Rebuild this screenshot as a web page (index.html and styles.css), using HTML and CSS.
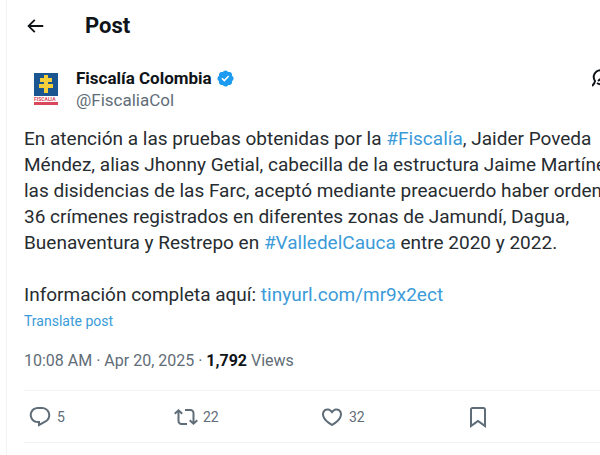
FILE: index.html
```html
<!DOCTYPE html>
<html lang="es">
<head>
    <meta charset="UTF-8">
    <meta name="viewport" content="width=device-width, initial-scale=1.0">
    <title>Post</title>
    <link rel="stylesheet" href="styles.css">
</head>
<body>
    <main class="column">
        <header class="topbar">
            <button class="icon-btn back" aria-label="Back">
                <svg viewBox="0 0 24 24"><path d="M7.414 13l5.043 5.04-1.414 1.42L3.586 12l7.457-7.46 1.414 1.42L7.414 11H21v2H7.414z"/></svg>
            </button>
            <h1>Post</h1>
        </header>

        <article class="post">
            <div class="author">
                <svg class="avatar" viewBox="0 0 44 44" role="img" aria-label="Fiscalía">
                    <rect x="10" y="6" width="24" height="23" fill="#1c5691"/>
                    <path d="M20 8h4v3h4v4h-4v2h5v4h-5v5h-4v-5h-5v-4h5v-2h-4v-4h4z" fill="#f4cf3a"/>
                    <text x="10" y="34" class="avatar-text">FISCALIA</text>
                    <rect x="10" y="35" width="24" height="3" fill="#d9475a"/>
                </svg>
                <div class="names">
                    <div class="name">
                        <a href="#">Fiscalía Colombia</a>
                        <svg class="badge" viewBox="0 0 22 22"><path d="M20.396 11c-.018-.646-.215-1.275-.57-1.816-.354-.54-.852-.972-1.438-1.246.223-.607.27-1.264.14-1.897-.131-.634-.437-1.218-.882-1.687-.47-.445-1.053-.75-1.687-.882-.633-.13-1.29-.083-1.897.14-.273-.587-.704-1.086-1.245-1.44S11.647 1.62 11 1.604c-.646.017-1.273.213-1.813.568s-.969.854-1.24 1.44c-.608-.223-1.267-.272-1.902-.14-.635.13-1.22.436-1.69.882-.445.47-.749 1.055-.878 1.688-.13.633-.08 1.29.144 1.896-.587.274-1.087.705-1.443 1.245-.356.54-.555 1.17-.574 1.817.02.647.218 1.276.574 1.817.356.54.856.972 1.443 1.245-.224.606-.274 1.263-.144 1.896.13.634.433 1.218.877 1.688.47.443 1.054.747 1.687.878.633.132 1.29.084 1.897-.136.274.586.705 1.084 1.246 1.439.54.354 1.17.551 1.816.569.647-.016 1.276-.213 1.817-.567s.972-.854 1.245-1.44c.604.239 1.266.296 1.903.164.636-.132 1.22-.447 1.68-.907.46-.46.776-1.044.908-1.681s.075-1.299-.165-1.903c.586-.274 1.084-.705 1.439-1.246.354-.54.551-1.17.569-1.816zM9.662 14.85l-3.429-3.428 1.293-1.302 2.072 2.072 4.4-4.794 1.347 1.246z"/></svg>
                    </div>
                    <a class="handle" href="#">@FiscaliaCol</a>
                </div>
                <button class="icon-btn grok" aria-label="Explain this post">
                    <svg viewBox="0 0 24 24"><path d="M14 6A6.5 6.5 0 0 0 3 14C3 16 2 17 0 19M6 14l11-9M15 9A6.5 6.5 0 0 1 5 16" fill="none" stroke="currentColor" stroke-width="2"/></svg>
                </button>
            </div>

            <p class="text">En atención a las pruebas obtenidas por la <a href="#">#Fiscalía</a>, Jaider Poveda<br>
                Méndez, alias Jhonny Getial, cabecilla de la estructura Jaime Martíne<br>
                las disidencias de las Farc, aceptó mediante preacuerdo haber orden<br>
                36 crímenes registrados en diferentes zonas de Jamundí, Dagua,<br>
                Buenaventura y Restrepo en <a href="#">#ValledelCauca</a> entre 2020 y 2022.<br>
                <br>
                Información completa aquí: <a href="#">tinyurl.com/mr9x2ect</a></p>
            <button class="translate">Translate post</button>

            <div class="meta"><a href="#">10:08 AM · Apr 20, 2025</a> · <strong>1,792</strong> Views</div>

            <div class="actions">
                <button class="action" aria-label="Reply">
                    <svg viewBox="0 0 24 24"><path d="M1.751 10c0-4.42 3.584-8 8.005-8h4.366c4.49 0 8.129 3.64 8.129 8.13 0 2.96-1.607 5.68-4.196 7.11l-8.054 4.46v-3.69h-.067c-4.49.1-8.183-3.51-8.183-8.01zm8.005-6c-3.317 0-6.005 2.69-6.005 6 0 3.37 2.77 6.08 6.138 6.01l.351-.01h1.761v2.3l5.087-2.81c1.951-1.08 3.163-3.13 3.163-5.36 0-3.39-2.744-6.13-6.129-6.13H9.756z"/></svg>
                    <span>5</span>
                </button>
                <button class="action" aria-label="Repost">
                    <svg viewBox="0 0 24 24"><path d="M4.5 3.88l4.432 4.14-1.364 1.46L5.5 7.55V16c0 1.1.896 2 2 2H13v2H7.5c-2.209 0-4-1.79-4-4V7.55L1.432 9.48.068 8.02 4.5 3.88zM16.5 6H11V4h5.5c2.209 0 4 1.79 4 4v8.45l2.068-1.93 1.364 1.46-4.432 4.14-4.432-4.14 1.364-1.46 2.068 1.93V8c0-1.1-.896-2-2-2z"/></svg>
                    <span>22</span>
                </button>
                <button class="action" aria-label="Like">
                    <svg viewBox="0 0 24 24"><path d="M16.697 5.5c-1.222-.06-2.679.51-3.89 2.16l-.805 1.09-.806-1.09C9.984 6.01 8.526 5.44 7.304 5.5c-1.243.07-2.349.78-2.91 1.91-.552 1.12-.633 2.78.479 4.82 1.074 1.97 3.257 4.27 7.129 6.61 3.87-2.34 6.052-4.64 7.126-6.61 1.111-2.04 1.03-3.7.477-4.82-.561-1.13-1.666-1.84-2.908-1.91zm4.187 7.69c-1.351 2.48-4.001 5.12-8.379 7.67l-.503.3-.504-.3c-4.379-2.55-7.029-5.19-8.382-7.67-1.36-2.5-1.41-4.86-.514-6.67.887-1.79 2.647-2.91 4.601-3.01 1.651-.09 3.368.56 4.798 2.01 1.429-1.45 3.146-2.1 4.796-2.01 1.954.1 3.714 1.22 4.601 3.01.896 1.81.846 4.17-.514 6.67z"/></svg>
                    <span>32</span>
                </button>
                <button class="action" aria-label="Bookmark">
                    <svg viewBox="0 0 24 24"><path d="M4 4.5C4 3.12 5.119 2 6.5 2h11C18.881 2 20 3.12 20 4.5v18.44l-8-5.71-8 5.71V4.5zM6.5 4c-.276 0-.5.22-.5.5v14.56l6-4.29 6 4.29V4.5c0-.28-.224-.5-.5-.5h-11z"/></svg>
                </button>
            </div>
        </article>
    </main>
</body>
</html>
```

FILE: styles.css
```css
* {
    box-sizing: border-box;
}
body {
    margin: 0;
    background: #fff;
    color: #0f1419;
    font-family: Roboto, "Liberation Sans", sans-serif;
}
a {
    color: #3b9bd8;
    text-decoration: none;
}
button {
    padding: 0;
    border: none;
    background: none;
    color: inherit;
    font: inherit;
    cursor: pointer;
}
svg {
    display: block;
    fill: currentColor;
}
.column {
    min-height: 100vh;
    margin-left: 6px;
    padding-left: 17px;
    border-left: 1px solid #eff3f4;
    overflow: hidden;
}
.topbar {
    display: flex;
    align-items: center;
    gap: 39px;
    height: 52px;
}
.topbar h1 {
    margin: 0;
    font-size: 22px;
    line-height: 26px;
    font-weight: 700;
}
.back svg {
    width: 22px;
    height: 22px;
}
.author {
    display: flex;
    gap: 8px;
    margin: 15px -16px 15px 0;
}
.avatar {
    width: 44px;
    height: 44px;
}
.avatar-text {
    font-size: 5px;
    font-weight: 700;
    fill: #d9475a;
}
.names {
    flex: 1;
    font-size: 17px;
    line-height: 22px;
}
.name {
    display: flex;
    align-items: center;
    gap: 4px;
    font-weight: 700;
}
.name a {
    color: #0f1419;
}
.badge {
    width: 19px;
    height: 19px;
    fill: #1d9bf0;
}
.handle {
    color: #5f6d78;
}
.grok {
    align-self: flex-start;
}
.grok svg {
    width: 24px;
    height: 24px;
}
.text {
    margin: 0;
    font-size: 19px;
    line-height: 26px;
    white-space: nowrap;
    color: #272c30;
}
.translate {
    display: block;
    color: #3b9bd8;
    font-size: 14px;
    line-height: 26px;
}
.meta {
    margin: 16px 0 18px;
    color: #5f6d78;
    font-size: 16px;
    line-height: 22px;
}
.meta a {
    color: inherit;
}
.meta strong {
    color: #0f1419;
}
.actions {
    display: grid;
    grid-template-columns: repeat(4, 1fr);
    margin-right: -12px;
    padding-left: 4px;
    border-top: 1px solid #eff3f4;
    border-bottom: 1px solid #eff3f4;
}
.action {
    display: flex;
    align-items: center;
    gap: 5px;
    height: 51px;
    color: #5f6d78;
    font-size: 14px;
}
.action svg {
    width: 24px;
    height: 24px;
}
```
